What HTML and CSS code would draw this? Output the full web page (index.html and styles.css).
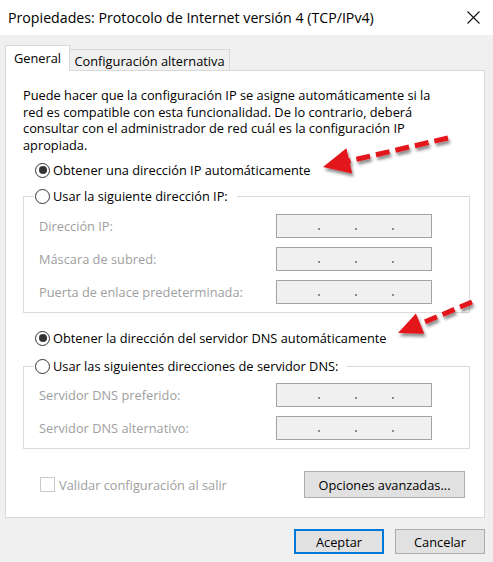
FILE: index.html
```html
<!DOCTYPE html>
<html lang="es">
<head>
<meta charset="utf-8">
<title>Propiedades: Protocolo de Internet versión 4 (TCP/IPv4)</title>
<link rel="stylesheet" href="styles.css">
</head>
<body>
<div class="window">
  <header class="titlebar">
    <span class="title">Propiedades: Protocolo de Internet versión 4 (TCP/IPv4)</span>
    <svg class="close" width="13" height="13" viewBox="0 0 13 13"><path d="M0.5 0.5L12.5 12.5M12.5 0.5L0.5 12.5" stroke="#111" stroke-width="1.1" fill="none"/></svg>
  </header>
  <main class="client">
    <div class="tabs">
      <div class="tab tab-active">General</div>
      <div class="tab tab-alt">Configuración alternativa</div>
    </div>
    <section class="panel">
      <p class="intro">Puede hacer que la configuración IP se asigne automáticamente si la<br>red es compatible con esta funcionalidad. De lo contrario, deberá<br>consultar con el administrador de red cuál es la configuración IP<br>apropiada.</p>

      <div class="radio-row row-first"><span class="radio checked"></span><span>Obtener una dirección IP automáticamente</span></div>

      <fieldset class="group group-ip">
        <legend><span class="radio-row"><span class="radio"></span><span>Usar la siguiente dirección IP:</span></span></legend>
        <div class="field"><span class="label">Dirección IP:</span><span class="ip"><i></i><i></i><i></i></span></div>
        <div class="field"><span class="label">Máscara de subred:</span><span class="ip"><i></i><i></i><i></i></span></div>
        <div class="field"><span class="label">Puerta de enlace predeterminada:</span><span class="ip"><i></i><i></i><i></i></span></div>
      </fieldset>

      <div class="radio-row row-dns"><span class="radio checked"></span><span>Obtener la dirección del servidor DNS automáticamente</span></div>

      <fieldset class="group group-dns">
        <legend><span class="radio-row"><span class="radio"></span><span>Usar las siguientes direcciones de servidor DNS:</span></span></legend>
        <div class="field"><span class="label">Servidor DNS preferido:</span><span class="ip"><i></i><i></i><i></i></span></div>
        <div class="field"><span class="label">Servidor DNS alternativo:</span><span class="ip"><i></i><i></i><i></i></span></div>
      </fieldset>

      <div class="bottom-row">
        <div class="check"><span class="box"></span><span>Validar configuración al salir</span></div>
        <button class="btn btn-adv">Opciones avanzadas...</button>
      </div>
    </section>
    <div class="footer">
      <button class="btn btn-primary">Aceptar</button>
      <button class="btn">Cancelar</button>
    </div>
  </main>
  <svg class="arrows" width="493" height="562" viewBox="0 0 493 562">
    <defs>
      <filter id="shadow" x="-20%" y="-20%" width="140%" height="160%">
        <feDropShadow dx="1.5" dy="3" stdDeviation="1.6" flood-color="#000" flood-opacity="0.45"/>
      </filter>
    </defs>
    <g filter="url(#shadow)" fill="#e3141b" stroke="#e3141b">
      <path d="M448 138 L349 161" stroke-width="5" stroke-dasharray="14 6" fill="none"/>
      <polygon points="323,167 346.4,148.2 352.2,173.6" stroke="none"/>
      <path d="M472 302 L420 324" stroke-width="5" stroke-dasharray="13 6" fill="none"/>
      <polygon points="398,333 415.9,313.6 424.3,333.8" stroke="none"/>
    </g>
  </svg>
</div>
</body>
</html>
```

FILE: styles.css
```css
* { box-sizing: border-box; }

html, body {
  margin: 0;
  padding: 0;
}

body {
  width: 493px;
  height: 562px;
  overflow: hidden;
  background: #f0f0f0;
  font-family: "Open Sans", "Noto Sans", sans-serif;
  font-size: 12.8px;
  color: #000;
}

.window {
  position: relative;
  width: 493px;
  height: 562px;
}

.titlebar {
  height: 35px;
  background: #fff;
  display: flex;
  align-items: center;
  justify-content: space-between;
  padding: 0 13px 0 8px;
}

.title {
  font-size: 14.2px;
  color: #000;
}

.close { display: block; }

.client {
  padding: 10px 8px 0 5px;
}

.tabs {
  display: flex;
  align-items: flex-end;
  height: 25px;
  position: relative;
  z-index: 2;
}

.tab {
  border: 1px solid #d9d9d9;
  border-bottom: none;
  display: flex;
  align-items: center;
  justify-content: center;
}

.tab-active {
  width: 65px;
  height: 26px;
  margin-bottom: -1px;
  background: #fff;
  padding-bottom: 1px;
}

.tab-alt {
  width: 161px;
  height: 21px;
  margin-left: -1px;
  background: #f0f0f0;
  padding-top: 1px;
}

.panel {
  position: relative;
  z-index: 1;
  height: 448px;
  background: #fff;
  border: 1px solid #d9d9d9;
  padding: 16px 0 0 0;
}

.intro {
  margin: 0 0 0 17px;
  line-height: 16.5px;
}

.radio-row {
  display: flex;
  align-items: center;
  height: 20px;
  white-space: nowrap;
}

.row-first {
  margin: 7px 0 0 29px;
}

.row-dns {
  margin: 15px 0 0 29px;
}

.radio {
  width: 15px;
  height: 15px;
  border: 1px solid #333;
  border-radius: 50%;
  margin-right: 3px;
  display: flex;
  align-items: center;
  justify-content: center;
  flex: none;
}

.radio.checked::after {
  content: "";
  width: 8px;
  height: 8px;
  border-radius: 50%;
  background: #333;
}

.group {
  margin: 6px 14px 0 17px;
  padding: 8px 37px 8px 0;
  border: 1px solid #dcdcdc;
  min-width: 0;
  display: flex;
  flex-direction: column;
  gap: 9px;
}

.group-dns {
  margin-top: 8px;
  padding-top: 7px;
}

.group legend {
  margin-left: 10px;
  padding: 0 9px 0 1px;
}

.field {
  display: flex;
  align-items: center;
  justify-content: space-between;
  padding-left: 15px;
  height: 24px;
}

.label {
  color: #a0a0a0;
}

.ip {
  width: 156px;
  height: 24px;
  border: 1px solid #a3a3a3;
  background: #f0f0f0;
  display: flex;
  align-items: flex-end;
  padding: 0 0 7px 41px;
  gap: 35px;
}

.ip i {
  display: block;
  width: 2px;
  height: 2px;
  background: #8a8a8a;
}

.bottom-row {
  display: flex;
  align-items: center;
  justify-content: space-between;
  margin: 22px 19px 0 34px;
  height: 27px;
}

.check {
  display: flex;
  align-items: center;
  color: #a0a0a0;
}

.box {
  width: 15px;
  height: 15px;
  border: 1px solid #cacaca;
  background: #fff;
  margin-right: 4px;
}

.btn {
  font-family: inherit;
  font-size: 12.8px;
  color: #000;
  background: #e1e1e1;
  border: 1px solid #adadad;
  padding: 0;
  border-radius: 0;
}

.btn-adv {
  width: 161px;
  height: 27px;
}

.footer {
  display: flex;
  justify-content: flex-end;
  gap: 11px;
  margin-top: 11px;
}

.footer .btn {
  width: 90px;
  height: 25px;
}

.footer .btn-primary {
  border: 2px solid #0078d7;
}

.arrows {
  position: absolute;
  left: 0;
  top: 0;
  z-index: 10;
  pointer-events: none;
}
```
